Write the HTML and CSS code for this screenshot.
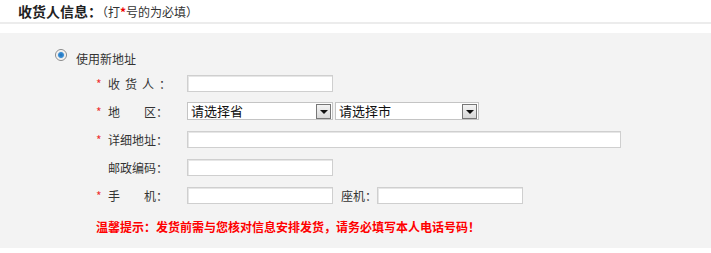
FILE: index.html
```html
<!DOCTYPE html>
<html lang="zh">
<head>
<meta charset="utf-8">
<link rel="stylesheet" href="styles.css">
</head>
<body>
<div class="head">
  <span class="title">收货人信息：</span><span class="note">（打<b class="star">*</b>号的为必填）</span>
</div>
<div class="panel">
  <div class="radio-row">
    <span class="radio"></span><span class="radio-label">使用新地址</span>
  </div>
  <div class="form">
    <div class="row">
      <span class="star">*</span><span class="label sp1">收货人：</span>
      <span class="input w146"></span>
    </div>
    <div class="row">
      <span class="star">*</span><span class="label sp2">地区：</span>
      <span class="select"><span class="sel-text">请选择省</span><span class="btn"><span class="arrow"></span></span></span>
      <span class="select second"><span class="sel-text">请选择市</span><span class="btn"><span class="arrow"></span></span></span>
    </div>
    <div class="row">
      <span class="star">*</span><span class="label">详细地址：</span>
      <span class="input w434"></span>
    </div>
    <div class="row">
      <span class="star"></span><span class="label">邮政编码：</span>
      <span class="input w146"></span>
    </div>
    <div class="row">
      <span class="star">*</span><span class="label sp3">手机：</span>
      <span class="input w146"></span>
      <span class="label2">座机：</span>
      <span class="input w146"></span>
    </div>
    <div class="warn">温馨提示：发货前需与您核对信息安排发货，请务必填写本人电话号码！</div>
  </div>
</div>
</body>
</html>
```
FILE: styles.css
```css
body {
  margin: 0;
  background: #fff;
  font-family: "Noto Sans CJK SC", "DejaVu Sans", sans-serif;
  font-size: 12px;
  color: #333;
}
.head {
  height: 22px;
  line-height: 22px;
  padding-left: 18px;
  border-bottom: 2px solid #ececec;
}
.title {
  font-size: 14px;
  font-weight: bold;
  color: #222;
}
.note {
  font-size: 12px;
  color: #333;
}
.note .star {
  color: #e00;
  font-weight: bold;
}
.panel {
  margin-top: 9px;
  background: #f3f3f3;
  height: 215px;
  padding-top: 14px;
  box-sizing: border-box;
}
.radio-row {
  height: 22px;
  display: flex;
  align-items: center;
  padding-left: 55px;
}
.radio {
  width: 10px;
  height: 10px;
  border-radius: 50%;
  border: 1px solid #8a8a8a;
  background: radial-gradient(circle, #1f6fb8 0, #3a8fd6 2.5px, #e8e8e8 3.5px, #fff 5px);
  margin-right: 9px;
  margin-top: -6px;
}
.radio-label {
  color: #333;
}
.form {
  padding-left: 96px;
}
.row {
  height: 28px;
  display: flex;
  align-items: center;
}
.star {
  width: 12px;
  color: #e33;
  font-size: 12px;
}
.label {
  width: 79px;
  color: #333;
}
.sp1 { letter-spacing: 5px; }
.sp2 { word-spacing: 0; }
.sp2::first-letter { margin-right: 24px; }
.sp3::first-letter { margin-right: 24px; }
.input {
  height: 15px;
  background: #fff;
  border: 1px solid #cfcfcf;
  box-shadow: inset 1px 1px 0 #e6e6e6;
}
.w146 { width: 144px; }
.w434 { width: 432px; }
.label2 {
  margin-left: 8px;
  width: 36px;
}
.select {
  width: 144px;
  height: 16px;
  background: #fff;
  border: 1px solid #c4c4c4;
  display: flex;
  align-items: center;
  justify-content: space-between;
  font-size: 13px;
  color: #111;
}
.select.second {
  margin-left: 2px;
  width: 142px;
}
.sel-text {
  padding-left: 3px;
  line-height: 16px;
}
.btn {
  width: 13px;
  height: 13px;
  margin-right: 1px;
  border: 1px solid #777;
  background: linear-gradient(#f4f4f4, #d8d8d8);
  display: flex;
  align-items: center;
  justify-content: center;
}
.arrow {
  width: 0;
  height: 0;
  border-left: 4px solid transparent;
  border-right: 4px solid transparent;
  border-top: 4px solid #111;
  margin-top: 1px;
}
.warn {
  margin-top: 9px;
  color: #f00;
  font-weight: bold;
  font-size: 12px;
}
```
